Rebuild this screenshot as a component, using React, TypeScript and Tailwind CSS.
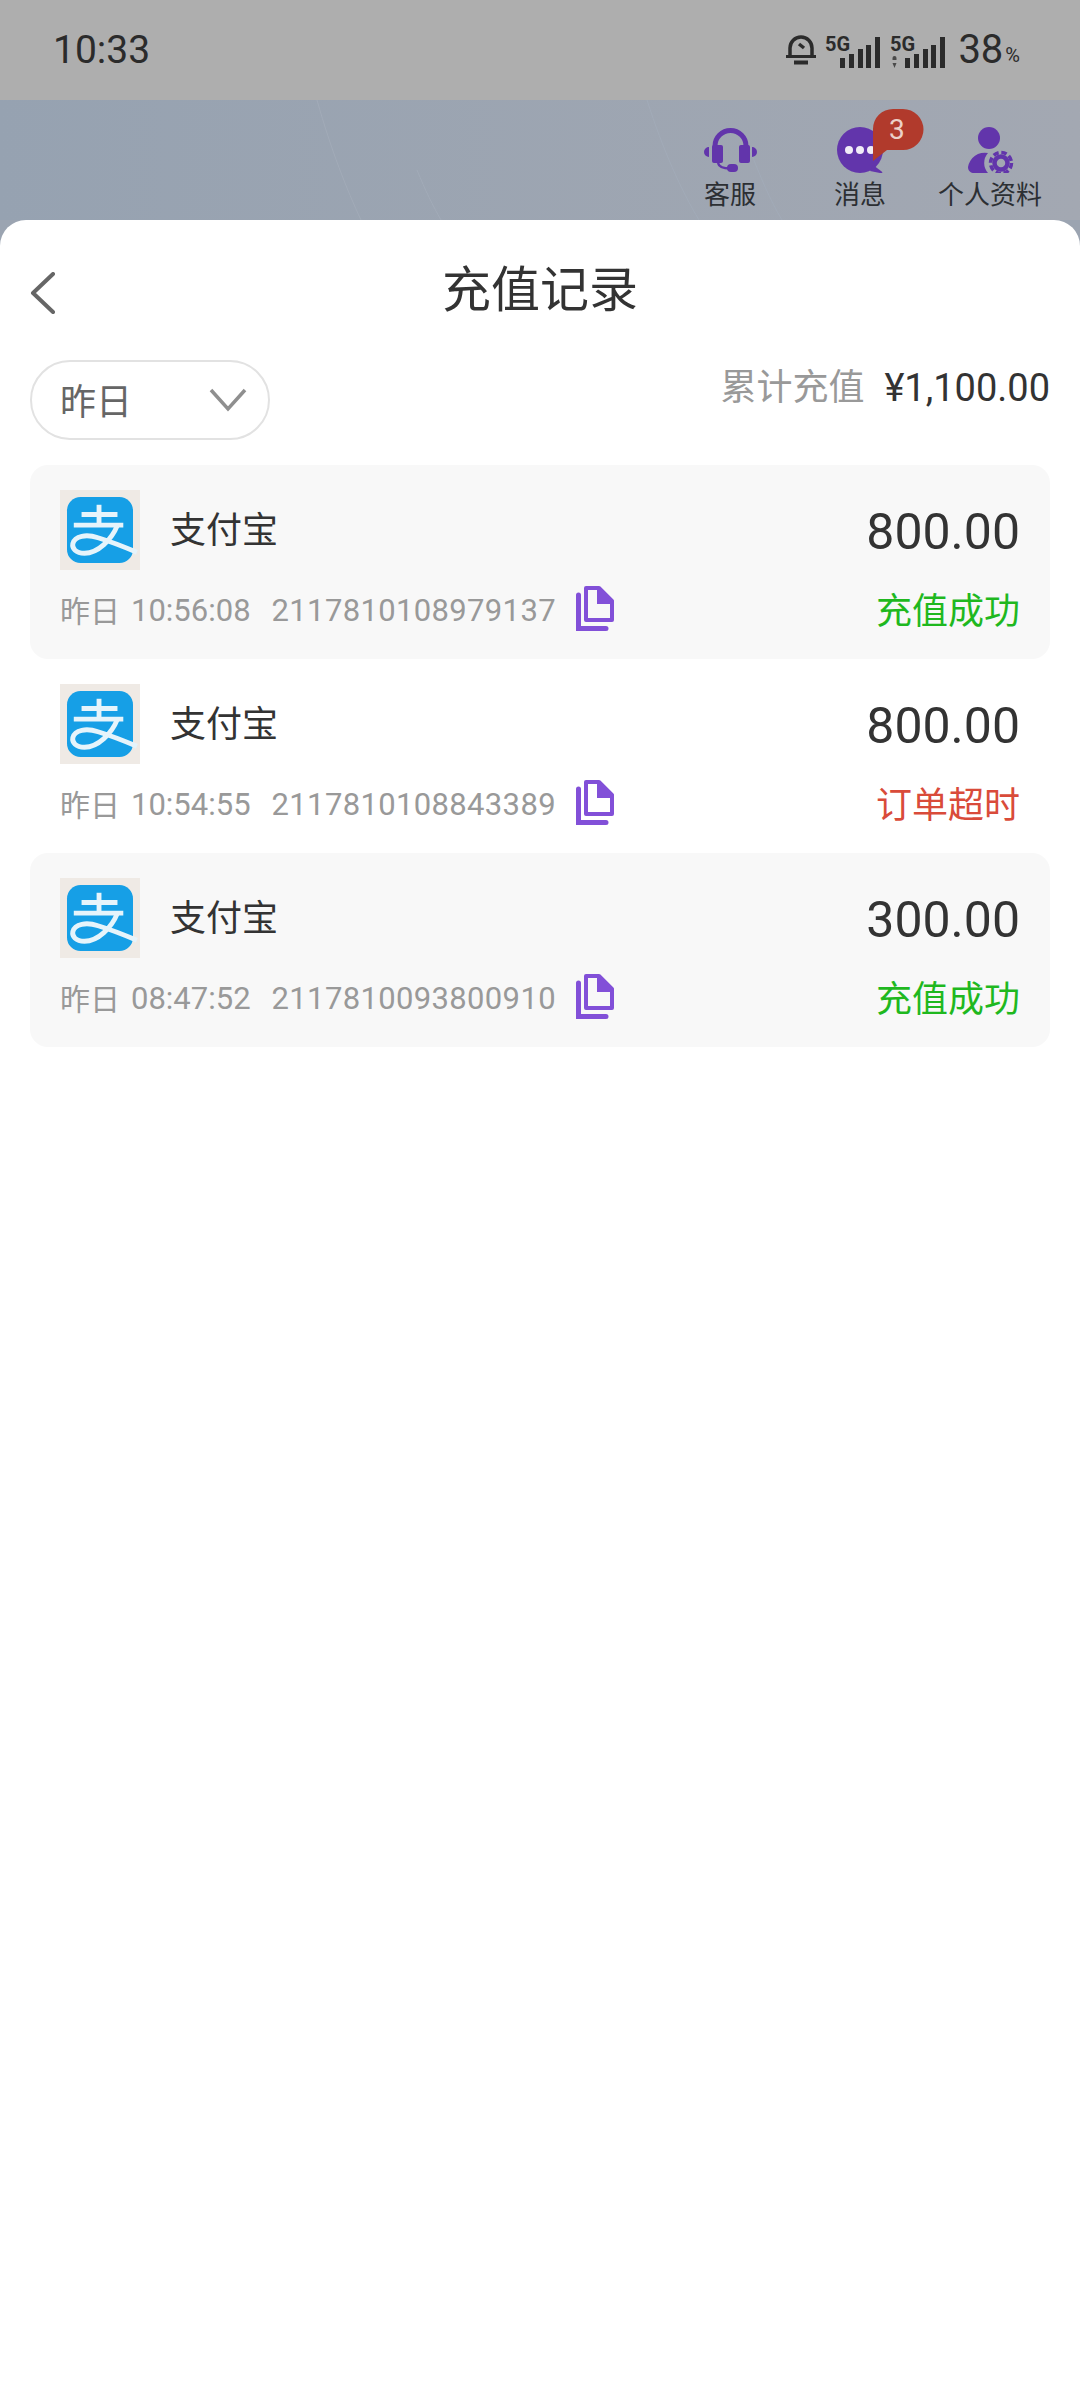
const sans = "font-['Roboto','Noto_Sans_CJK_SC',sans-serif]";

function Signal({ dot }: { dot?: boolean }) {
  return (
    <svg width="55" height="40" viewBox="0 -6 55 40" className="mb-[1px] shrink-0">
      <text x="0" y="15" fontFamily="Roboto" fontWeight="700" fontSize="20" fill="#2b2b2b">
        5G
      </text>
      {dot && <path d="M2.500 22a2 2 0 0 1 4 0v2h-4zM2.500 27h4l-2 5z" fill="#4a4a4a" />}
      <rect x="15" y="22" width="5" height="10" fill="#2b2b2b" />
      <rect x="24" y="18" width="5" height="14" fill="#2b2b2b" />
      <rect x="33" y="13" width="5" height="19" fill="#2b2b2b" />
      <rect x="41" y="9" width="5" height="23" fill="#2b2b2b" />
      <rect x="50" y="1" width="5" height="31" fill="#2b2b2b" />
    </svg>
  );
}

function StatusBar() {
  return (
    <div className={`flex h-[100px] items-center justify-between bg-[#aeaeae] pl-[53px] pr-[60px] text-[#2b2b2b] ${sans}`}>
      <span className="text-[39px] leading-none">10:33</span>
      <div className="flex items-center">
        <svg width="30" height="30" viewBox="0 0 30 30" className="shrink-0">
          <path d="M4 21v-8a11 11 0 0 1 22 0v8" fill="none" stroke="#2b2b2b" strokeWidth="3.500" />
          <path d="M0 21.500h30" stroke="#2b2b2b" strokeWidth="3" />
          <path d="M8 27.500h14" stroke="#2b2b2b" strokeWidth="4" />
          <path d="M13 9l5 4" stroke="#2b2b2b" strokeWidth="3.500" />
        </svg>
        <div className="ml-[9px]">
          <Signal />
        </div>
        <div className="ml-[10px]">
          <Signal dot />
        </div>
        <span className="ml-[13px] text-[40px] leading-none">38</span>
        <span className="ml-[2px] mt-[10px] text-[20px] leading-none">%</span>
      </div>
    </div>
  );
}

function HeadsetIcon() {
  return (
    <svg width="53" height="46" viewBox="0 0 53 46">
      <path d="M11 24v-5a15.500 15.500 0 0 1 31 0v5" fill="none" stroke="#6235ab" strokeWidth="5" />
      <rect x="8" y="18" width="11" height="18" rx="2" fill="#6235ab" />
      <rect x="35" y="18" width="11" height="18" rx="2" fill="#6235ab" />
      <path d="M5 20v10a5 5 0 0 1 0-10zM48 20v10a5 5 0 0 0 0-10z" fill="#6235ab" />
      <path d="M14 36c1 4 5 5.500 12 5.500" fill="none" stroke="#6235ab" strokeWidth="2.500" />
      <rect x="23" y="37" width="11" height="8" rx="4" fill="#6235ab" />
    </svg>
  );
}

function MessageIcon() {
  return (
    <svg width="46" height="46" viewBox="0 0 46 46">
      <circle cx="23" cy="23" r="23" fill="#6235ab" />
      <path d="M36 38l8 6c2 1.500 2 2-1 2l-10-2z" fill="#6235ab" />
      <circle cx="12" cy="23" r="4" fill="#f1edf7" />
      <circle cx="23" cy="23" r="4" fill="#f1edf7" />
      <circle cx="34" cy="23" r="4" fill="#f1edf7" />
    </svg>
  );
}

function ProfileIcon() {
  return (
    <svg width="48" height="46" viewBox="0 0 48 46">
      <circle cx="23" cy="11" r="11" fill="#6235ab" />
      <path d="M22 26a17 17 0 0 0-20 14c0 4 3 6 6 6h14a15 15 0 0 1 0-20z" fill="#6235ab" />
      <circle cx="35" cy="36" r="6.500" fill="none" stroke="#6235ab" strokeWidth="4.500" />
      <circle cx="35" cy="36" r="10.500" fill="none" stroke="#6235ab" strokeWidth="3.500" strokeDasharray="5.500 2.750" />
    </svg>
  );
}

function HeaderLink({ icon, label, children }: { icon: React.ReactNode; label: string; children?: React.ReactNode }) {
  return (
    <div className="relative flex w-[130px] flex-col items-center">
      <div className="flex h-[46px] items-center">{icon}</div>
      <span className="mt-[5px] whitespace-nowrap text-[26px] leading-[34px] text-[#2c2f33]">{label}</span>
      {children}
    </div>
  );
}

function Header() {
  return (
    <div className={`relative flex h-[120px] justify-end bg-gradient-to-r from-[#96a2b1] to-[#a3a8b2] pr-[25px] pt-[27px] ${sans}`}>
      <svg className="absolute inset-0 h-full w-full" viewBox="0 0 1080 120" fill="none" stroke="#a2abb8" strokeWidth="1">
        <path d="M317 0c14 50 30 90 44 120" />
        <path d="M417 70c8 20 16 36 24 50" />
        <path d="M647 0c16 50 34 90 52 120" />
        <path d="M750 50c10 26 20 50 32 70" />
      </svg>
      <HeaderLink icon={<HeadsetIcon />} label="客服" />
      <HeaderLink icon={<MessageIcon />} label="消息">
        <div className="absolute left-[77px] top-[-18px]">
          <svg width="52" height="54" viewBox="0 0 52 54" className="absolute left-0 top-0">
            <path d="M1 20a20 20 0 0 1 20-20h10a20 20 0 0 1 0 41H15L1 52z" fill="#b13a2c" />
          </svg>
          <span className="absolute left-[17px] top-[3px] text-[28px] leading-[36px] text-[#ecd0c8]">3</span>
        </div>
      </HeaderLink>
      <HeaderLink icon={<ProfileIcon />} label="个人资料" />
    </div>
  );
}

function AlipayLogo() {
  return (
    <div className="flex h-[80px] w-[80px] shrink-0 items-center justify-center bg-[#efeae5]">
      <svg width="66" height="66" viewBox="0 0 68 68" className="overflow-visible">
        <rect width="68" height="68" rx="14" fill="#169fe6" />
        <g fill="none" stroke="#e6f4fb" strokeWidth="5">
          <path d="M15 18h37" />
          <path d="M33 8v20" />
          <path d="M7 29h51" />
          <path d="M52 29c-6 15-20 29-34 29-9 0-13-5-12-10 2-8 14-10 26-6 13 4 26 9 40 15" />
        </g>
      </svg>
    </div>
  );
}

function CopyIcon() {
  return (
    <svg width="38" height="45" viewBox="0 0 38 45" className="shrink-0">
      <path d="M2.500 9v33.500H30" fill="none" stroke="#8250d8" strokeWidth="5" strokeLinecap="round" />
      <path d="M10 2h13l13 13v19H10z" fill="none" stroke="#8250d8" strokeWidth="4" strokeLinejoin="round" />
      <path d="M21 1h3l14 14v3H21z" fill="#8250d8" />
    </svg>
  );
}

type Record = {
  time: string;
  order: string;
  amount: string;
  status: string;
  ok: boolean;
  shaded: boolean;
};

const records: Record[] = [
  { time: '10:56:08', order: '2117810108979137', amount: '800.00', status: '充值成功', ok: true, shaded: true },
  { time: '10:54:55', order: '2117810108843389', amount: '800.00', status: '订单超时', ok: false, shaded: false },
  { time: '08:47:52', order: '2117810093800910', amount: '300.00', status: '充值成功', ok: true, shaded: true },
];

function RecordCard({ record }: { record: Record }) {
  return (
    <div className={`h-[194px] rounded-[18px] px-[30px] pt-[25px] ${record.shaded ? 'bg-[#f8f8f8]' : 'bg-white'}`}>
      <div className="flex h-[80px] items-center">
        <AlipayLogo />
        <span className="ml-[30px] pt-[2px] text-[36px] text-[#333333]">支付宝</span>
        <span className="ml-auto pt-[3px] text-[50px] leading-none text-[#333333]">{record.amount}</span>
      </div>
      <div className="mt-[15px] flex h-[50px] items-center text-[#999999]">
        <span className="pt-[2px] text-[30px]">昨日</span>
        <span className="ml-[11px] pt-[2px] text-[31px]">{record.time}</span>
        <span className="ml-[21px] pt-[2px] text-[31px] tracking-[0.35px]">{record.order}</span>
        <div className="mb-[4px] ml-[20px]">
          <CopyIcon />
        </div>
        <span className={`ml-auto pt-[3px] text-[36px] ${record.ok ? 'text-[#1fb81f]' : 'text-[#d94b3a]'}`}>{record.status}</span>
      </div>
    </div>
  );
}

export default function App() {
  return (
    <div className={`flex h-[2400px] flex-col overflow-hidden bg-[#9ba4b1] ${sans}`}>
      <StatusBar />
      <Header />
      <div className="flex-1 rounded-t-[26px] bg-white px-[30px]">
        <div className="relative flex h-[140px] items-center justify-center">
          <svg width="26" height="42" viewBox="0 0 26 42" className="absolute left-0 top-[52px]">
            <path d="M23 2L3 21l20 19" fill="none" stroke="#666666" strokeWidth="4" strokeLinecap="round" strokeLinejoin="round" />
          </svg>
          <h1 className="text-[49px] font-normal leading-none text-[#333333]">充值记录</h1>
        </div>
        <div className="flex h-[105px] items-start justify-between">
          <div className="flex h-[80px] w-[240px] items-center justify-between rounded-full border-2 border-[#e2e2e2] pl-[28px] pr-[21px]">
            <span className="pt-[6px] text-[36px] text-[#666666]">昨日</span>
            <svg width="38" height="24" viewBox="0 0 38 24">
              <path d="M2 2l17 19L36 2" fill="none" stroke="#8f8f8f" strokeWidth="3.500" />
            </svg>
          </div>
          <div className="flex items-center pt-[3px]">
            <span className="text-[36px] leading-[50px] text-[#999999]">累计充值</span>
            <span className="ml-[20px] text-[38px] leading-[50px] text-[#333333]">¥1,100.00</span>
          </div>
        </div>
        <div className="flex flex-col">
          {records.map((record) => (
            <RecordCard key={record.order} record={record} />
          ))}
        </div>
      </div>
    </div>
  );
}
